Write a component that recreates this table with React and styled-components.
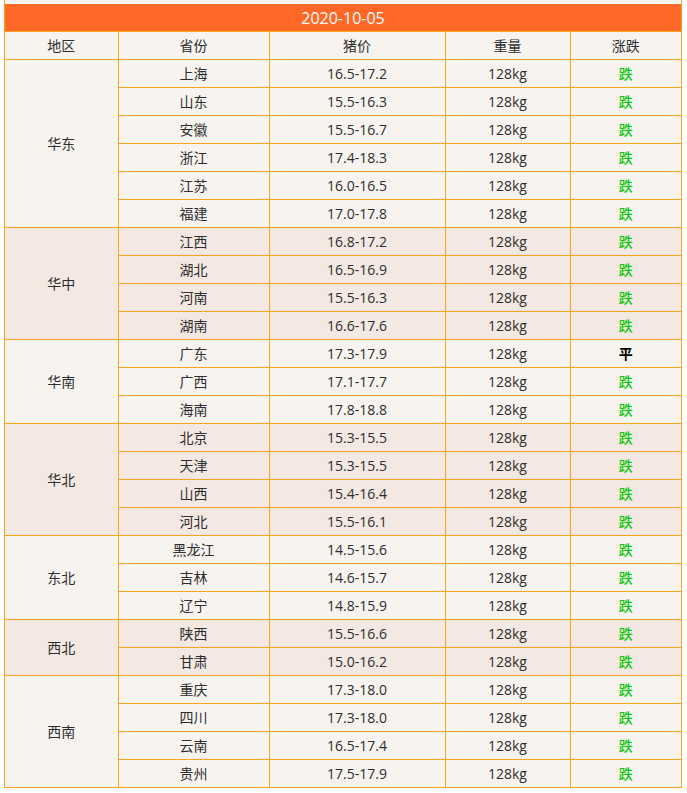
import React from 'react'
import styled, { createGlobalStyle } from 'styled-components'

const GlobalStyle = createGlobalStyle`
    body {
        margin: 0;
        background: #fff;
        font-family: "Open Sans", "Noto Sans CJK SC", sans-serif;
    }
`

const regions = [
    { name: '华东', rows: [['上海', '16.5-17.2'], ['山东', '15.5-16.3'], ['安徽', '15.5-16.7'], ['浙江', '17.4-18.3'], ['江苏', '16.0-16.5'], ['福建', '17.0-17.8']] },
    { name: '华中', rows: [['江西', '16.8-17.2'], ['湖北', '16.5-16.9'], ['河南', '15.5-16.3'], ['湖南', '16.6-17.6']] },
    { name: '华南', rows: [['广东', '17.3-17.9', '平'], ['广西', '17.1-17.7'], ['海南', '17.8-18.8']] },
    { name: '华北', rows: [['北京', '15.3-15.5'], ['天津', '15.3-15.5'], ['山西', '15.4-16.4'], ['河北', '15.5-16.1']] },
    { name: '东北', rows: [['黑龙江', '14.5-15.6'], ['吉林', '14.6-15.7'], ['辽宁', '14.8-15.9']] },
    { name: '西北', rows: [['陕西', '15.5-16.6'], ['甘肃', '15.0-16.2']] },
    { name: '西南', rows: [['重庆', '17.3-18.0'], ['四川', '17.3-18.0'], ['云南', '16.5-17.4'], ['贵州', '17.5-17.9']] },
]

export default function App() {
    let renderRegions = () => {
        return regions.map((region, gi) => region.rows.map((row, ri) => (
            <Row key={region.name + ri} $dark={gi % 2 === 1}>
                {ri === 0 && <Cell rowSpan={region.rows.length}>{region.name}</Cell>}
                <Cell>{row[0]}</Cell>
                <Cell>{row[1]}</Cell>
                <Cell>128kg</Cell>
                <Trend $flat={row[2] === '平'}>{row[2] || '跌'}</Trend>
            </Row>
        )))
    }

    return (
        <>
            <GlobalStyle />
            <Page>
                <Wrapper>
                    <Title>2020-10-05</Title>
                    <Table>
                        <colgroup>
                            <col style={{ width: 113 }} />
                            <col style={{ width: 151 }} />
                            <col style={{ width: 176 }} />
                            <col style={{ width: 125 }} />
                            <col style={{ width: 111 }} />
                        </colgroup>
                        <tbody>
                            <Row>
                                <Cell>地区</Cell>
                                <Cell>省份</Cell>
                                <Cell>猪价</Cell>
                                <Cell>重量</Cell>
                                <Cell>涨跌</Cell>
                            </Row>
                            {renderRegions()}
                        </tbody>
                    </Table>
                </Wrapper>
            </Page>
        </>
    )
}

const Page = styled.div`
    padding-left: 4px;
    width: 678px;
`
const Wrapper = styled.div`
    background: #f7f3ef;
    border-left: 1px solid #f8a51c;
    border-right: 1px solid #f8a51c;
    padding-top: 3px;
`
const Title = styled.div`
    height: 27px;
    border-top: 1px solid #fff;
    background: #ff6727;
    color: #fff;
    font-size: 16px;
    line-height: 28px;
    text-align: center;
`
const Table = styled.table`
    width: 100%;
    border-collapse: collapse;
    table-layout: fixed;
`
const Row = styled.tr`
    background: ${props => props.$dark ? '#f3e8e2' : '#f7f3ef'};
`
const Cell = styled.td`
    height: 26px;
    padding: 1px 0 0;
    border: 1px solid #f8a51c;
    text-align: center;
    vertical-align: middle;
    font-size: 14px;
    line-height: 20px;
    color: #2e2e2e;
    &:first-child {
        border-left: none;
    }
    &:last-child {
        border-right: none;
    }
`
const Trend = styled(Cell)`
    color: ${props => props.$flat ? '#000' : '#12c612'};
    font-weight: ${props => props.$flat ? 700 : 500};
`
